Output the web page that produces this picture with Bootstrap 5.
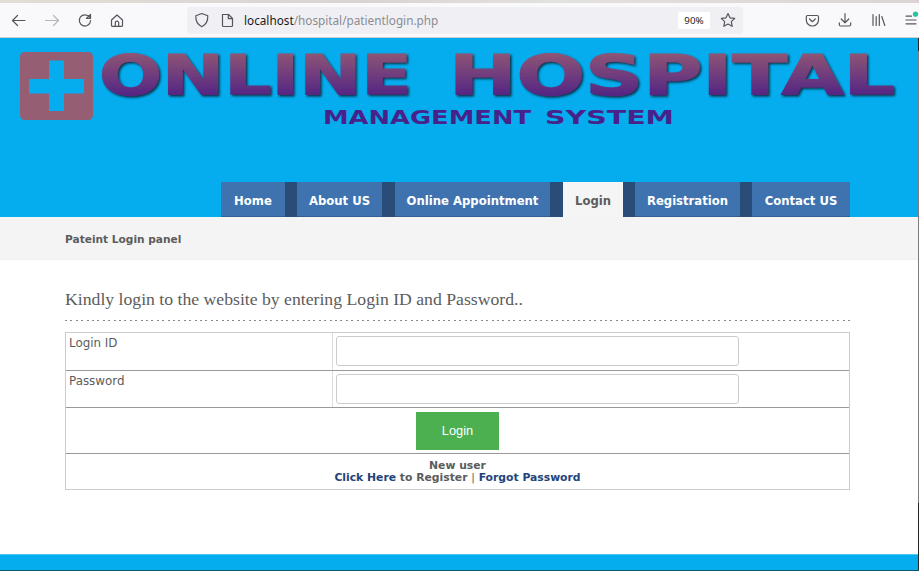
<!DOCTYPE html>
<html lang="en">
<head>
<meta charset="utf-8">
<meta name="viewport" content="width=device-width, initial-scale=1">
<title>Patient Login</title>
<link href="https://cdn.jsdelivr.net/npm/bootstrap@5.3.0/dist/css/bootstrap.min.css" rel="stylesheet">
<style>
body{font-family:"DejaVu Sans",Verdana,sans-serif;font-size:11.3px;line-height:12px;color:#5c5c5c;background:#fff;height:571px;overflow:hidden}
.page-frame{width:919px;height:571px;border-bottom:1px solid #12586f}
.window-top{height:3px;flex:none;background:linear-gradient(90deg,#e4dcd6,#d8d4d3 40%,#e3e1e0 60%,#dcd3d5)}
.toolbar{height:35px;background:#f9f9fb;border-bottom:1px solid #c9ced3;padding-left:11px}
.toolbar svg{flex:none;fill:none;stroke:#55555e;stroke-width:1.2;stroke-linecap:round;stroke-linejoin:round}
.address{width:556px;height:27px;margin-left:4px;background:#f0f0f4;padding:0 5px 0 7px;font:11.75px/27px "Noto Sans","Open Sans",sans-serif;color:#8b8b92}
.address b{font-weight:400;color:#18181f}
.url-text{padding-top:1px}
.zoom-level{width:32px;height:17px;background:#fff;font:9.8px/17px "Noto Sans",sans-serif;color:#222;border-radius:2px}
.viewport-area{flex:1;min-height:0;border-right:1px solid;border-image:linear-gradient(#2b2420 0 14px,#827b76 14px 464px,#262422 464px) 1}
.site-head{height:179px;background:#05adee}
.logo{display:block;width:918px;height:144px}
.menu{height:35px;padding-left:221px}
.menu a{height:35px;background:#3e73b0;border-bottom:1px solid #335f96;color:#fff;font-weight:700;font-size:11.65px;line-height:38px;text-decoration:none;text-align:center;white-space:nowrap;flex:none}
.menu i{flex:none;background:#294d77;height:35px}
.menu a.current{background:#f5f5f5;color:#5c5c5c;border-color:#f5f5f5}
.crumb{height:43px;background:#f4f4f4;padding:16px 65px 0;font-weight:700;font-size:10.6px;border-bottom:1px solid #f0f0f0}
.content-area{padding:29px 68px 0 65px;flex:1}
.lead-title{font:17.7px/20px "Liberation Serif",Georgia,serif;margin:0;height:31px;white-space:nowrap}
.dots{height:1px;background:repeating-linear-gradient(90deg,#888 0 2px,transparent 2px 5.4px)}
.form-grid{margin-top:11px;border:1px solid #ccc;height:158px;width:785px}
.form-line{height:38px;border-bottom:1px solid #999}
.form-line+.form-line{height:37px}
.form-line label{width:267px;border-right:1px solid #ddd;padding:4px 3px;font-size:11.9px}
.form-line input{width:403px;height:30px;border:1px solid #ccc;border-radius:3px;margin:3px 0 0 3px;padding:0 8px;outline:0}
.submit-line{height:46px;border-bottom:1px solid #999}
.btn-login{width:83px;height:38px;background:#4caf50;color:#fff;border:0;border-radius:0;padding:0;font:12.8px "Liberation Sans",sans-serif}
.links{font-weight:700;padding-top:6px;font-size:10.8px}
.links a{color:#1f4479;text-decoration:none}
.site-foot{height:16px;flex:none;background:#05adee;border-top:1px solid #4cc5f2}
</style>
</head>
<body>
<div class="page-frame d-flex flex-column">
  <div class="window-top"></div>
  <div class="toolbar d-flex align-items-center flex-shrink-0">
    <svg width="172" height="34" viewBox="11 3 172 34"><path d="M25 20.500H13m4.500-5L12.500 20.500l5 5"/><path stroke="#b5b5bb" d="M45.500 20.500h12.500m-4.500-5 5 5-5 5"/><path d="M89.500 17.200a5.600 5.600 0 1 0 1 3.500M90.500 14.500v4h-4z"/><path d="M111.500 20l5.500-5 5.500 5v5.500q0 .8-.8.800h-9.400q-.8 0-.8-.8zM115.300 26v-3.200a1.700 1.700 0 0 1 3.400 0V26"/></svg>
    <div class="address d-flex align-items-center rounded-1">
      <svg width="50" height="27" viewBox="194 7 50 27"><path d="M201.800 13.500l6 2.300c.2 5.500-1.800 9-6 11-4.200-2-6.200-5.500-6-11z"/><path d="M222.500 14.500h6l4 4v7q0 1-1 1h-8q-1 0-1-1zM228.300 14.500v4.200h4.200"/></svg>
      <span class="url-text"><b>localhost</b>/hospital/patientlogin.php</span>
      <span class="zoom-level ms-auto text-center">90%</span>
      <svg class="ms-2" width="20" height="20" viewBox="718.500 10 20 20"><path d="M728.500 13.500l2 4.300 4.700.6-3.400 3.200.9 4.700-4.200-2.300-4.200 2.300.9-4.700-3.400-3.200 4.700-.6z"/></svg>
    </div>
    <svg class="ms-auto" width="119" height="34" viewBox="800 3 119 34"><path d="M807.500 15.500h9.600q1.400 0 1.400 1.400v3a6 6 0 0 1-12.200 0v-3q0-1.400 1.200-1.400zM809.500 19l2.900 2.700 2.900-2.700"/><path d="M845 13.500v9m-3.800-3.500 3.800 3.700 3.800-3.700M839.300 22.800v1.700q0 1.500 1.500 1.500h8.400q1.500 0 1.500-1.500v-1.700"/><path d="M873 14.500v11M876.200 16.500v9M879.300 14.500v11M881.800 16.500l3 9"/><path d="M906 16.200h5.500M906 20h10M906 23.800h10"/><circle cx="915.500" cy="14.200" r="2.600" fill="#2ac3a2" stroke="none"/></svg>
  </div>
  <div class="viewport-area d-flex flex-column">
    <header class="site-head flex-shrink-0">
      <svg class="logo" viewBox="0 38 918 144" role="img" aria-label="Online Hospital Management System">
        <defs><linearGradient id="tone" gradientUnits="userSpaceOnUse" x1="0" y1="0" x2="0" y2="1" gradientTransform="translate(0 48) scale(1 50)"><stop offset="0" stop-color="#955b73"/><stop offset="1" stop-color="#502285"/></linearGradient>
        <filter id="drop" x="-5%" y="-20%" width="110%" height="150%"><feDropShadow dx="1.500" dy="1.500" stdDeviation=".8" flood-color="#082a40"/></filter></defs>
        <path fill="#955e73" fill-rule="evenodd" d="M25 52h63q5 0 5 5v58q0 5-5 5H25q-5 0-5-5V57q0-5 5-5zM49 60.500V79H29v14.500h20V111h15V93.500h20V79H64V60.500z"/>
        <g font-family="DejaVu Sans" font-weight="700" fill="url(#tone)" font-size="56" filter="url(#drop)" stroke="url(#tone)" stroke-width="1.200">
          <text x="99" y="94" textLength="313" lengthAdjust="spacingAndGlyphs">ONLINE</text>
          <text x="449" y="94" textLength="446" lengthAdjust="spacingAndGlyphs">HOSPITAL</text>
        </g>
        <g font-family="DejaVu Sans" font-weight="700" fill="#48228b" font-size="19">
          <text x="323" y="124" textLength="208" lengthAdjust="spacingAndGlyphs">MANAGEMENT</text>
          <text x="545" y="124" textLength="129" lengthAdjust="spacingAndGlyphs">SYSTEM</text>
        </g>
      </svg>
      <nav class="menu d-flex">
        <a href="#" style="width:64px">Home</a><i style="width:12px"></i>
        <a href="#" style="width:85px">About US</a><i style="width:13px"></i>
        <a href="#" style="width:155px">Online Appointment</a><i style="width:13px"></i>
        <a href="#" class="current" style="width:60px">Login</a><i style="width:12px"></i>
        <a href="#" style="width:105px">Registration</a><i style="width:12px"></i>
        <a href="#" style="width:98px">Contact US</a>
      </nav>
    </header>
    <div class="crumb flex-shrink-0">Pateint Login panel</div>
    <main class="content-area">
      <h1 class="lead-title">Kindly login to the website by entering Login ID and Password..</h1>
      <div class="dots"></div>
      <form class="form-grid">
        <div class="form-line d-flex"><label for="uid">Login ID</label><input id="uid" type="text"></div>
        <div class="form-line d-flex"><label for="pwd">Password</label><input id="pwd" type="password"></div>
        <div class="submit-line d-flex justify-content-center align-items-center"><button type="button" class="btn btn-login">Login</button></div>
        <div class="links text-center">New user<br><a href="#">Click Here</a> to Register <span class="fw-normal">|</span> <a href="#">Forgot Password</a></div>
      </form>
    </main>
    <footer class="site-foot"></footer>
  </div>
</div>
<script src="https://cdn.jsdelivr.net/npm/bootstrap@5.3.0/dist/js/bootstrap.bundle.min.js"></script>
</body>
</html>
